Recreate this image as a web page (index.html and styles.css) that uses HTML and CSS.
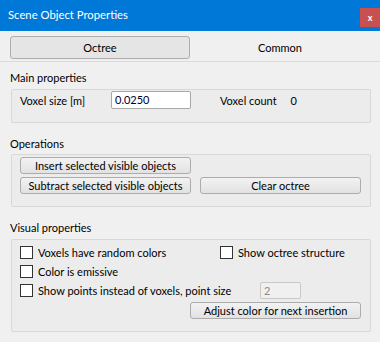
FILE: index.html
```html
<!DOCTYPE html>
<html>
<head>
<meta charset="utf-8">
<link rel="stylesheet" href="styles.css">
</head>
<body>
<div class="titlebar">
  <span class="title">Scene Object Properties</span>
  <span class="close">x</span>
</div>
<div class="tabs">
  <div class="tab active">Octree</div>
  <div class="tab">Common</div>
</div>

<div class="group-label main-label">Main properties</div>
<div class="group main">
  <div class="main-row">
    <span class="lbl-size">Voxel size [m]</span>
    <div class="field">0.0250</div>
    <span class="lbl-count">Voxel count</span>
    <span class="count">0</span>
  </div>
</div>

<div class="group-label ops-label">Operations</div>
<div class="group ops">
  <div class="btn insert">Insert selected visible objects</div>
  <div class="btn subtract">Subtract selected visible objects</div>
  <div class="btn clear">Clear octree</div>
</div>

<div class="group-label vis-label">Visual properties</div>
<div class="group vis">
  <div class="row">
    <div class="check first"><span class="box"></span><span>Voxels have random colors</span></div>
    <div class="check"><span class="box"></span><span>Show octree structure</span></div>
  </div>
  <div class="row">
    <div class="check"><span class="box"></span><span>Color is emissive</span></div>
  </div>
  <div class="row">
    <div class="check points"><span class="box"></span><span>Show points instead of voxels, point size</span></div>
    <div class="spin">2</div>
  </div>
  <div class="btn adjust">Adjust color for next insertion</div>
</div>
</body>
</html>
```

FILE: styles.css
```css
html, body {
  margin: 0;
  padding: 0;
}
body {
  width: 380px;
  height: 342px;
  overflow: hidden;
  background: #f0f0f0;
  font-family: "Segoe UI", Lato, sans-serif;
  font-size: 11px;
  color: #000;
}
.titlebar {
  height: 31px;
  background: #0078d7;
  display: flex;
  align-items: flex-start;
}
.title {
  color: #fff;
  font-size: 11.3px;
  line-height: 16px;
  margin: 7px 0 0 8px;
}
.close {
  margin-left: auto;
  margin-top: 8px;
  width: 20px;
  height: 19px;
  background: #c75050;
  color: #fff;
  font-weight: bold;
  font-size: 9px;
  display: flex;
  align-items: center;
  justify-content: center;
}
.tabs {
  display: flex;
  padding: 5px 10px 2px;
  border-bottom: 1px solid #dadada;
}
.tab {
  width: 180px;
  height: 23px;
  box-sizing: border-box;
  display: flex;
  align-items: center;
  justify-content: center;
}
.tab.active {
  border: 1px solid #adadad;
  border-radius: 3px;
  background: #e5e5e5;
}
.group-label {
  margin-left: 10px;
  line-height: 16px;
  height: 16px;
}
.main-label { margin-top: 8px; }
.ops-label { margin-top: 13px; }
.vis-label { margin-top: 13px; }
.group {
  margin-left: 11px;
  width: 360px;
  box-sizing: border-box;
  border: 1px solid #d8d8d8;
  border-radius: 2px;
  background: #ececec;
}
.main {
  margin-top: 3px;
  height: 34px;
  padding: 1px 0 0 8px;
}
.main-row {
  display: flex;
  align-items: center;
  height: 18px;
}
.lbl-size { width: 91px; }
.field {
  width: 80px;
  height: 18px;
  box-sizing: border-box;
  background: #fff;
  border: 1px solid #a9a9a9;
  border-radius: 2px;
  padding-left: 3px;
  line-height: 16px;
  color: #000030;
}
.lbl-count { margin-left: 29px; }
.count { margin-left: 14px; }
.ops {
  margin-top: 2px;
  height: 53px;
  padding: 2px 0 0 8px;
  display: grid;
  grid-template-columns: 171px 161px;
  column-gap: 9px;
  row-gap: 3px;
  align-content: start;
}
.btn {
  height: 17px;
  box-sizing: border-box;
  border: 1px solid #acacac;
  border-radius: 3px;
  background: linear-gradient(#f2f2f2, #e2e2e2);
  display: flex;
  align-items: center;
  justify-content: center;
  white-space: nowrap;
}
.insert { grid-column: 1; grid-row: 1; }
.subtract { grid-column: 1; grid-row: 2; }
.clear { grid-column: 2; grid-row: 2; }
.vis {
  margin-top: 3px;
  height: 93px;
  padding: 3px 0 0 8px;
}
.row {
  display: flex;
  align-items: center;
  height: 19px;
}
.check {
  display: flex;
  align-items: center;
  white-space: nowrap;
}
.check.first { width: 200px; }
.check.points { width: 240px; }
.box {
  width: 13px;
  height: 13px;
  box-sizing: border-box;
  border: 1px solid #333;
  background: #fff;
  margin-right: 5px;
  flex: none;
}
.spin {
  width: 41px;
  height: 17px;
  box-sizing: border-box;
  border: 1px solid #c8c8c8;
  border-radius: 2px;
  background: #f0f0f0;
  color: #8a8a8a;
  padding-left: 3px;
  line-height: 15px;
}
.adjust {
  width: 171px;
  margin: 2px 0 0 170px;
}
```
